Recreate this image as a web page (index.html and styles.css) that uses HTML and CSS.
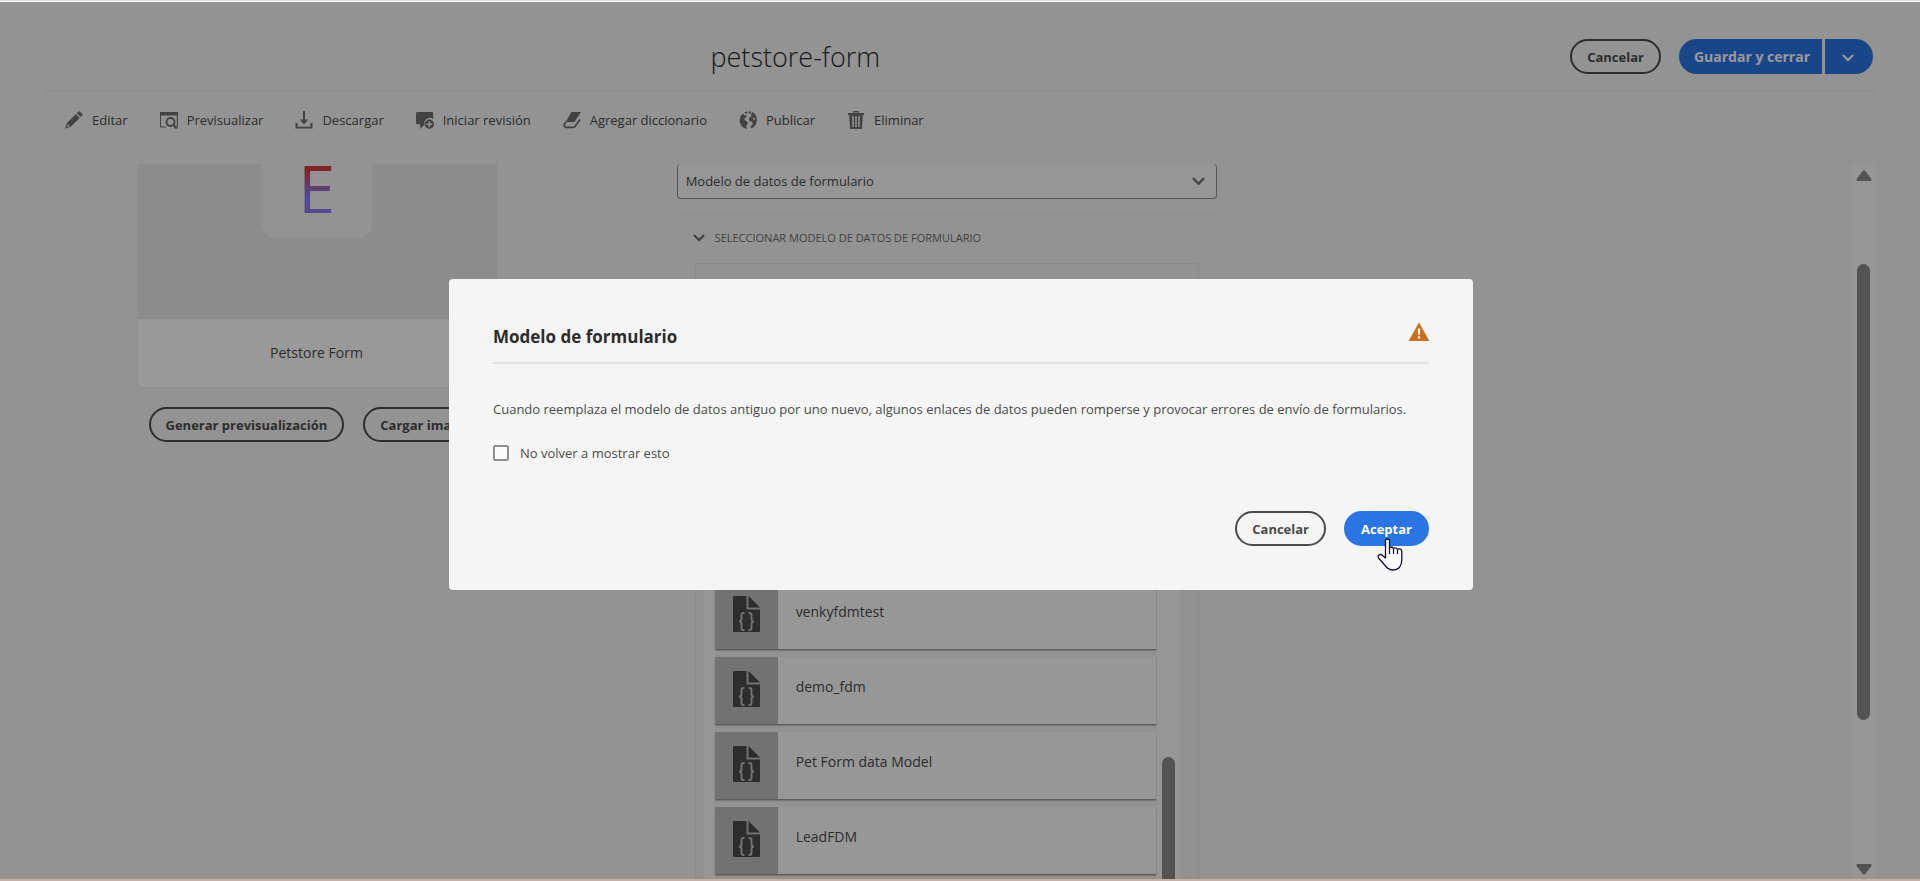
FILE: index.html
```html
<!DOCTYPE html>
<html lang="es">
<head>
<meta charset="utf-8">
<title>petstore-form</title>
<link rel="stylesheet" href="styles.css">
</head>
<body>
<svg class="defs" aria-hidden="true">
  <symbol id="doc" viewBox="0 0 27 36">
    <path fill="#4b4b4b" d="M1 0h12.500v13.500H27V35a1 1 0 0 1-1 1H1a1 1 0 0 1-1-1V1a1 1 0 0 1 1-1zM15.500 0 27 11.500H15.500z"/>
    <path fill="none" stroke="#bebebe" stroke-width="2" d="M11.500 17H10.500Q8.500 17 8.500 19V23Q8.500 25.500 6 25.500Q8.500 25.500 8.500 28V32Q8.500 34 10.500 34H11.500M15.500 17H16.500Q18.500 17 18.500 19V23Q18.500 25.500 21 25.500Q18.500 25.500 18.500 28V32Q18.500 34 16.500 34H15.500"/>
  </symbol>
  <symbol id="chev" viewBox="0 0 12 8">
    <path fill="none" stroke="currentColor" stroke-width="2.100" stroke-linecap="round" stroke-linejoin="round" d="M1.500 1.500 6 6.200 10.500 1.500"/>
  </symbol>
</svg>
<div class="app">
  <header class="header">
    <h1 class="title">petstore-form</h1>
    <div class="header-actions">
      <button class="btn" type="button">Cancelar</button>
      <div class="split">
        <button class="split-main" type="button">Guardar y cerrar</button>
        <button class="split-more" type="button" aria-label="Más opciones"><svg width="12" height="8"><use href="#chev"/></svg></button>
      </div>
    </div>
  </header>
  <nav class="toolbar">
    <button class="tool" type="button"><svg viewBox="0 0 18 18"><path d="M11.800 2.200 13.600.4q.6-.6 1.200 0l2.700 2.500q.6.600 0 1.200l-1.800 1.900zM10.900 3.100l3.900 3.800L5.900 15.600.7 17.600q-.6.200-.4-.5L2 11.900zM2.900 13.300 1.900 16.200 4.800 15.100z"/></svg>Editar</button>
    <button class="tool" type="button"><svg viewBox="0 0 18 18"><path d="M0 1h18v15h-1.200V4.400H1v11.100H6V16.500H0z"/><circle cx="10.500" cy="11" r="4" fill="none" stroke="currentColor" stroke-width="1.900"/><path fill="none" stroke="currentColor" stroke-width="2.200" d="M13.200 13.800 16.800 17.600"/></svg>Previsualizar</button>
    <button class="tool" type="button"><svg viewBox="0 0 18 18"><path d="M8 0h2v8.500h3.200L9 13.400 4.800 8.500H8zM.5 12h2v3.800h13V12h2v5.600H.5z"/></svg>Descargar</button>
    <button class="tool" type="button"><svg viewBox="0 0 18 18"><path d="M1.500 1h14.300q1.400 0 1.400 1.400V8a5.400 5.400 0 0 0-8.600 5.500L4.300 18v-4.700H1.500Q0 13.300 0 11.900V2.400Q0 1 1.500 1z"/><path fill-rule="evenodd" d="M13.400 8.600a4.600 4.600 0 1 1 0 9.200 4.600 4.600 0 0 1 0-9.200zm-.8 1.800v2h-2V14h2v2h1.600v-2h2v-1.600h-2v-2z"/></svg>Iniciar revisión</button>
    <button class="tool" type="button"><svg viewBox="0 0 18 18"><path d="M8.500 1h8.400q1 0 .5.900L11.500 11H2.600z"/><path fill="none" stroke="currentColor" stroke-width="1.700" d="M3 11.100Q.5 13 1.300 15.200 1.800 16.300 3.200 16.300H10.600Q11.500 16.300 12 15.600L17 8.500"/></svg>Agregar diccionario</button>
    <button class="tool" type="button"><svg viewBox="0 0 18 18"><path d="M3.600 2.500 5.700 4.600 7.300 3.900 7.600 5.700 5.300 7.700 5.600 9.200 8.300 10.400 9 12.100 7.400 14.200 7.600 17.900A9 9 0 0 1 3.600 2.500zM5.300 1.500 8.200.3 8.600 1.600 7 3zM9.800.2 12.300.7 11 2.700 9.800 2.200zM13.200 1A9 9 0 0 1 14 16.400L11.600 17.600 12.100 15 13.900 13 13.300 10.700 10.900 10.200 9.700 7.900 11.200 5.700 12.900 5.200 11.700 3.900zM14.200 6.200 13.700 7.500 15.800 9.400 16.300 8z"/></svg>Publicar</button>
    <button class="tool" type="button"><svg viewBox="0 0 18 18"><path fill-rule="evenodd" d="M6 2V.9Q6 0 7 0h4q1 0 1 .9V2h5v2H15.800L15 18H3L2.200 4H1V2zM7.200 1.200V2h3.600v-.8zM5 5l.5 11H7L6.500 5zM8.200 5v11h1.600V5zM11.500 5 11 16h1.500L13 5z"/></svg>Eliminar</button>
  </nav>
  <div class="content">
    <main class="scroller">
      <section class="side">
        <div class="card">
          <div class="card-image"><div class="logo"><span class="logo-letter">E</span></div></div>
          <div class="card-name">Petstore Form</div>
        </div>
        <div class="side-actions">
          <button class="btn" type="button">Generar previsualización</button>
          <button class="btn" type="button">Cargar imagen</button>
        </div>
      </section>
      <section class="model">
        <div class="select-wrap">
          <select class="select" aria-label="Modelo de formulario"><option>Modelo de datos de formulario</option></select>
          <svg class="select-icon" width="13" height="9"><use href="#chev"/></svg>
        </div>
        <h2 class="section"><svg width="12" height="8"><use href="#chev"/></svg>SELECCIONAR MODELO DE DATOS DE FORMULARIO</h2>
        <div class="panel">
          <div class="list">
            <ul class="rows">
              <li class="row"><span class="thumb"><svg width="27" height="36"><use href="#doc"/></svg></span><span class="name">venkyfdmtest</span></li>
              <li class="row"><span class="thumb"><svg width="27" height="36"><use href="#doc"/></svg></span><span class="name">demo_fdm</span></li>
              <li class="row"><span class="thumb"><svg width="27" height="36"><use href="#doc"/></svg></span><span class="name">Pet Form data Model</span></li>
              <li class="row"><span class="thumb"><svg width="27" height="36"><use href="#doc"/></svg></span><span class="name">LeadFDM</span></li>
            </ul>
            <div class="list-track"><div class="list-thumb"></div></div>
          </div>
        </div>
      </section>
    </main>
    <div class="track">
      <svg width="16" height="11" viewBox="0 0 16 11"><path fill="#8b8b8b" d="M6.600 1Q8-.6 9.400 1L15.400 9Q16 11 14.500 11H1.500Q0 11 .6 9z"/></svg>
      <div class="track-thumb"></div>
      <svg width="16" height="11" viewBox="0 0 16 11"><path fill="#8b8b8b" d="M6.600 10Q8 11.600 9.400 10L15.400 2Q16 0 14.500 0H1.500Q0 0 .6 2z"/></svg>
    </div>
  </div>
  <div class="overlay">
    <div class="dialog" role="dialog" aria-modal="true" aria-labelledby="dlg-title">
      <div class="dialog-head">
        <h2 class="dialog-title" id="dlg-title">Modelo de formulario</h2>
        <svg width="20" height="18" viewBox="0 0 20 18"><path fill="#cb6f1d" d="M9.400.6q.6-1 1.200 0l9.200 16.400q.5 1-.6 1H.8q-1.100 0-.6-1z"/><path fill="#f5f5f5" d="M8.800 5.500h2.400l-.3 6.500H9.100zM8.900 13.300h2.200v2.300H8.900z"/></svg>
      </div>
      <p class="dialog-text">Cuando reemplaza el modelo de datos antiguo por uno nuevo, algunos enlaces de datos pueden romperse y provocar errores de envío de formularios.</p>
      <label class="check"><input class="check-box" type="checkbox">No volver a mostrar esto</label>
      <div class="dialog-actions">
        <button class="btn" type="button">Cancelar</button>
        <button class="btn btn-primary" type="button">Aceptar
          <svg class="pointer" width="26" height="33" viewBox="0 0 26 33"><path fill="#fff" stroke="#15152a" stroke-width="1.300" stroke-linejoin="round" d="M8.500 20V3Q8.500 1 10.500 1T12.500 3V9.500Q14.500 8.300 16.300 10.200 18.800 9.200 20.300 11.200 24.500 10 24.800 13.500V22Q24.500 31.500 16.500 32 12 32 9 28.500L1.500 20Q.3 17.800 2.200 16.800 4 16 5.500 17.500z"/><path stroke="#15152a" stroke-width="1.300" d="M12.500 9V16M16.500 10.500V16M20.500 11.500V16"/></svg>
        </button>
      </div>
    </div>
  </div>
</div>
</body>
</html>
```
FILE: styles.css
```css
* {
  box-sizing: border-box;
}

body {
  margin: 0;
  height: 100vh;
  border-top: 1px solid #dcdde0;
  border-bottom: 2px solid #c4b0a6;
  padding-top: 1px;
  background: #fff;
  color: #4b4b4b;
  font: 13px/20px "Open Sans", "Noto Sans", sans-serif;
}

button,
select {
  font: inherit;
}

.defs {
  display: none;
}

.app {
  position: relative;
  display: flex;
  flex-direction: column;
  height: 100%;
  overflow: hidden;
  background: #f5f5f5;
}

.header {
  display: grid;
  grid-template-columns: 4fr 7fr;
  align-items: center;
  height: 90px;
  margin: 0 45px;
  padding-top: 21px;
  border-bottom: 2px solid #eaeaea;
}

.title {
  grid-column: 2;
  grid-row: 1;
  margin: 0;
  color: #2c2c2c;
  font-size: 27px;
  font-weight: 300;
  line-height: 36px;
}

.header-actions {
  grid-column: 2;
  grid-row: 1;
  justify-self: end;
  display: flex;
  gap: 18px;
  padding-right: 2px;
}

.btn {
  height: 35px;
  padding: 0 15px;
  border: 2px solid #4b4b4b;
  border-radius: 18px;
  background: transparent;
  color: #4b4b4b;
  font-weight: 700;
  white-space: nowrap;
}

.split {
  display: flex;
  gap: 3px;
}

.split-main,
.split-more {
  height: 35px;
  border: 0;
  background: #2a74e4;
  color: #fff;
  font-size: 14px;
  font-weight: 700;
}

.split-main {
  padding: 0 12px 0 15px;
  border-radius: 18px 0 0 18px;
}

.split-more {
  width: 48px;
  padding: 0 2px 0 0;
  border-radius: 0 18px 18px 0;
}

.toolbar {
  display: flex;
  gap: 32px;
  margin: 16px 65px 32px;
}

.tool {
  display: flex;
  align-items: center;
  gap: 9px;
  padding: 0;
  border: 0;
  background: none;
  color: #4b4b4b;
  line-height: 24px;
}

.tool svg {
  width: 18px;
  height: 18px;
  fill: #6e6e6e;
  color: #6e6e6e;
}

.content {
  flex: 1;
  min-height: 0;
  display: flex;
  margin: 0 45px;
}

.scroller {
  flex: 1;
  display: flex;
  gap: 10.5%;
  padding-left: 5%;
}

.side {
  flex: 0 0 360px;
  min-width: 0;
}

.card {
  border: 1px solid #eaeaea;
  border-top: 0;
  border-radius: 0 0 4px 4px;
  background: #fff;
}

.card-image {
  display: flex;
  justify-content: center;
  height: 155px;
  background: #eaeaea;
}

.logo {
  width: 110px;
  height: 73px;
  border-radius: 0 0 12px 12px;
  background: #f6f6f6;
  text-align: center;
}

.logo-letter {
  display: block;
  color: transparent;
  background: linear-gradient(#d7373f 10%, #8c7cf0 65%);
  background-clip: text;
  font-size: 67px;
  font-weight: 500;
  line-height: 49px;
}

.card-name {
  color: #4b4b4b;
  font-size: 14px;
  line-height: 68px;
  text-align: center;
}

.side-actions {
  display: flex;
  gap: 19px;
  padding: 19px 12px;
}

.model {
  flex: 0 0 540px;
  display: flex;
  flex-direction: column;
}

.select-wrap {
  position: relative;
  border-bottom: 1px solid #eaeaea;
  padding-bottom: 15px;
}

.select {
  display: block;
  width: 100%;
  height: 35px;
  padding: 0 8px;
  border: 1px solid #8e8e8e;
  border-top: 0;
  border-radius: 4px;
  background: #fafafa;
  color: #4b4b4b;
  appearance: none;
}

.select-icon {
  position: absolute;
  right: 12px;
  top: 13px;
  color: #6e6e6e;
}

.section {
  display: flex;
  align-items: center;
  gap: 10px;
  margin: 0;
  padding: 0 16px;
  color: #6e6e6e;
  font-size: 11px;
  font-weight: 400;
  line-height: 46px;
}

.panel {
  flex: 1;
  margin: 2px 18px 0;
  padding: 300px 18px 0 8px;
  border: 1px solid #e6e6e6;
  border-bottom: 0;
  border-radius: 4px 4px 0 0;
  background: #f2f2f2;
}

.list {
  display: flex;
  height: 100%;
  padding: 0 5px 0 11px;
  background: #fafafa;
}

.rows {
  flex: 1;
  margin: 0;
  padding: 18px 0 0;
  list-style: none;
  background: #f4f4f4;
}

.row {
  display: flex;
  height: 67px;
  margin-bottom: 8px;
  background: #fcfcfc;
  box-shadow: 0 1px 2px 0 #6e6e6e;
  clip-path: inset(0 0 -3px 0);
}

.thumb {
  display: grid;
  place-items: center;
  flex: 0 0 63px;
  padding-bottom: 3px;
  background: #bebebe;
}

.name {
  padding-left: 18px;
  font-size: 14px;
  line-height: 60px;
}

.list-track {
  display: flex;
  flex-direction: column;
  justify-content: flex-end;
  width: 18px;
  padding-left: 5px;
}

.list-thumb {
  height: 125px;
  border-radius: 7px 7px 0 0;
  background: #8b8b8b;
}

.track {
  display: flex;
  flex-direction: column;
  align-items: center;
  width: 23px;
  padding: 6px 0 4px;
  background: #fbfbfb;
}

.track-thumb {
  width: 13px;
  height: 456px;
  margin: 83px 0 auto;
  border-radius: 7px;
  background: #8b8b8b;
}

.overlay {
  position: absolute;
  inset: 0;
  display: flex;
  align-items: center;
  justify-content: center;
  padding: 0 0 12px 2px;
  background: rgba(0, 0, 0, 0.4);
}

.dialog {
  width: 1024px;
  max-width: 90%;
  padding: 44px;
  border-radius: 4px;
  background: #f5f5f5;
}

.dialog-head {
  display: flex;
  justify-content: space-between;
  padding-bottom: 12px;
  border-bottom: 2px solid #e1e1e1;
}

.dialog-title {
  margin: 0;
  color: #2c2c2c;
  font-size: 17px;
  font-weight: 700;
  line-height: 27px;
}

.dialog-text {
  margin: 35px 0 24px;
}

.check {
  display: flex;
  align-items: center;
  gap: 11px;
}

.check-box {
  appearance: none;
  width: 16px;
  height: 16px;
  margin: 0;
  border: 2px solid #8e8e8e;
  border-radius: 2px;
  background: #fafafa;
}

.dialog-actions {
  display: flex;
  justify-content: flex-end;
  gap: 18px;
  padding-top: 48px;
}

.btn-primary {
  position: relative;
  border-color: #2a74e4;
  background: #2a74e4;
  color: #fff;
}

.pointer {
  position: absolute;
  left: 31px;
  top: 25px;
}
```
